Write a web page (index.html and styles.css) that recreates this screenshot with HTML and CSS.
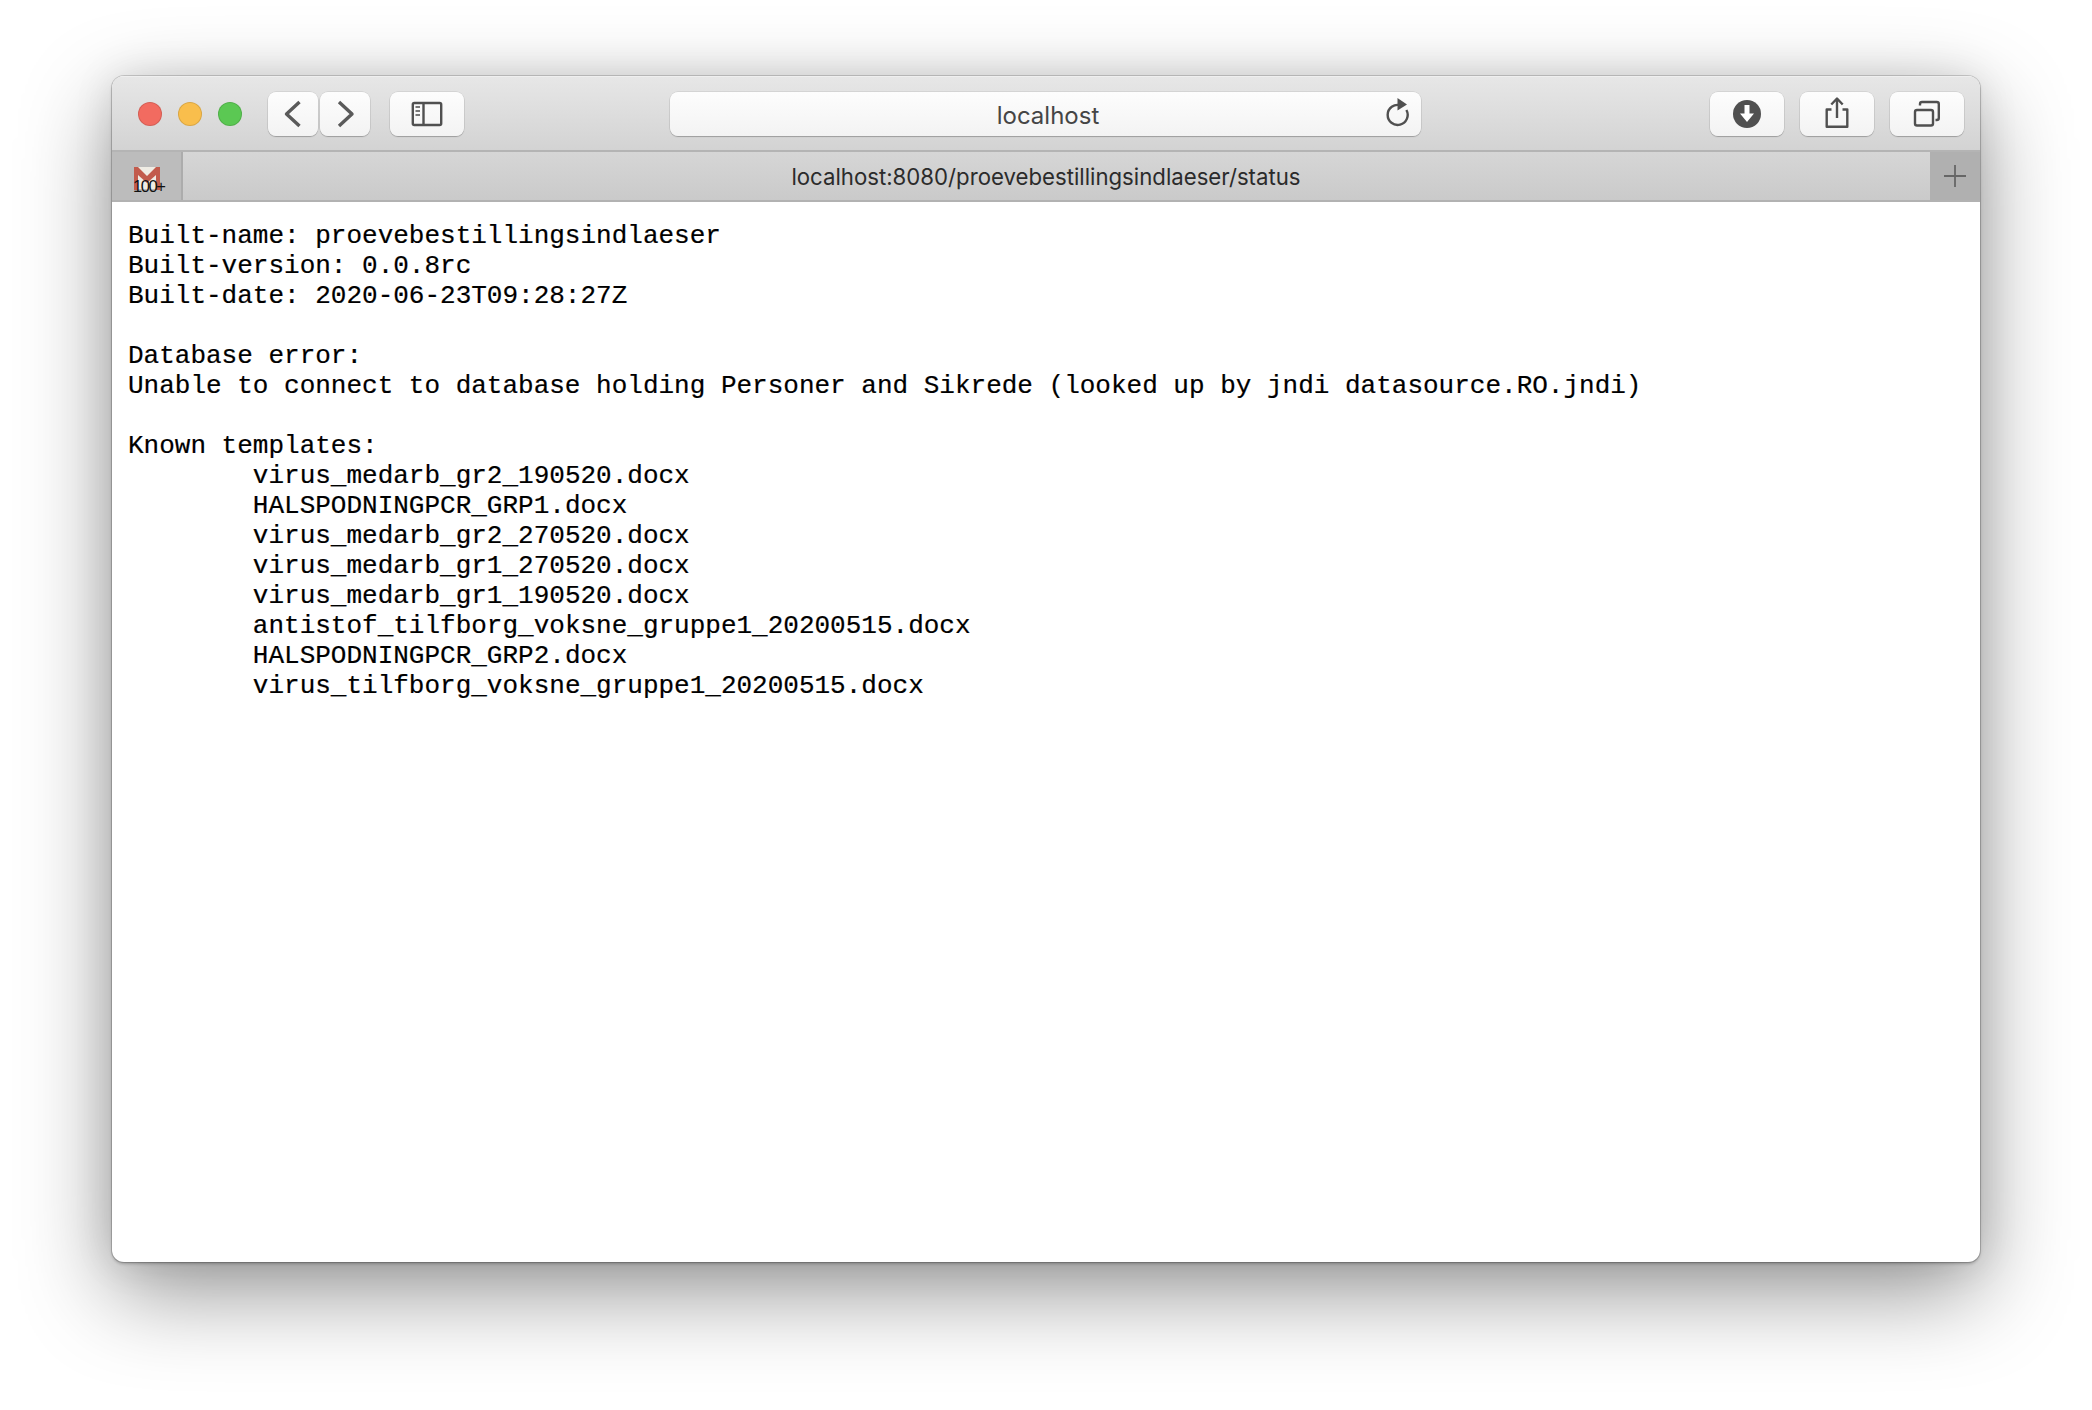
FILE: index.html
```html
<!DOCTYPE html>
<html lang="en">
<head>
<meta charset="utf-8">
<title>localhost</title>
<link rel="stylesheet" href="styles.css">
</head>
<body>
<main class="window">
  <header class="toolbar">
    <div class="lights">
      <span class="light red"></span>
      <span class="light yellow"></span>
      <span class="light green"></span>
    </div>
    <div class="nav">
      <button class="btn nav-btn" aria-label="Back"><svg width="50" height="44" viewBox="0 0 50 44"><path d="M31.500 10 L18.500 22 L31.500 34" class="ic"/></svg></button>
      <button class="btn nav-btn" aria-label="Forward"><svg width="50" height="44" viewBox="0 0 50 44"><path d="M19 10 L32 22 L19 34" class="ic"/></svg></button>
    </div>
    <button class="btn side-btn" aria-label="Sidebar"><svg width="74" height="44" viewBox="0 0 74 44"><rect x="22.800" y="11" width="28.400" height="22" rx="1.500" class="ic-thin"/><path d="M33.500 11 V33" class="ic-thin"/><path d="M25.500 15 H30 M25.500 19 H30 M25.500 23 H30" class="ic-tick"/></svg></button>
    <div class="address">
      <span class="address-text">localhost</span>
      <svg class="reload" width="26" height="30" viewBox="0 0 26 30"><path d="M16.500 7.300 A10 10 0 1 0 22.400 12" class="ic-thin"/><path d="M13.500 0 L23 6.500 L13.500 12.500 Z" class="ic-fill"/></svg>
    </div>
    <div class="actions">
      <button class="btn act-btn" aria-label="Downloads"><svg width="74" height="44" viewBox="0 0 74 44"><circle cx="37" cy="22" r="14" class="ic-fill"/><path d="M34.500 13 H39.500 V21.500 H44 L37 30 L30 21.500 H34.500 Z" class="ic-white"/></svg></button>
      <button class="btn act-btn" aria-label="Share"><svg width="74" height="44" viewBox="0 0 74 44"><path d="M31.500 17.500 H26.700 V34.800 H47.300 V17.500 H42.500" class="ic-thin"/><path d="M37 26 V7 M31.300 12.500 L37 6.500 L42.700 12.500" class="ic-thin"/></svg></button>
      <button class="btn act-btn" aria-label="Tabs"><svg width="74" height="44" viewBox="0 0 74 44"><rect x="25" y="18" width="18" height="15.500" rx="2" class="ic-thin"/><path d="M30 13.500 V12 Q30 10 32 10 H46.800 Q48.800 10 48.800 12 V26 Q48.800 28 46.800 28 H45.500" class="ic-thin"/></svg></button>
    </div>
  </header>
  <nav class="tabbar">
    <div class="pin-tab">
      <svg class="gmail" width="28" height="24" viewBox="0 0 28 24"><rect x="1" y="1" width="26" height="22" fill="#efece4"/><path d="M1 24 V1 H5 L14 10 L23 1 H27 V24 H23 V9 L14 17 L5 9 V24 Z" fill="#c25b4c"/></svg>
      <span class="badge">100+</span>
    </div>
    <div class="tab-title">localhost:8080/proevebestillingsindlaeser/status</div>
    <div class="new-tab"><svg width="22" height="22" viewBox="0 0 22 22"><path d="M11 0 V22 M0 11 H22" class="ic-plus"/></svg></div>
  </nav>
  <pre class="content">Built-name: proevebestillingsindlaeser
Built-version: 0.0.8rc
Built-date: 2020-06-23T09:28:27Z

Database error:
Unable to connect to database holding Personer and Sikrede (looked up by jndi datasource.RO.jndi)

Known templates:
	virus_medarb_gr2_190520.docx
	HALSPODNINGPCR_GRP1.docx
	virus_medarb_gr2_270520.docx
	virus_medarb_gr1_270520.docx
	virus_medarb_gr1_190520.docx
	antistof_tilfborg_voksne_gruppe1_20200515.docx
	HALSPODNINGPCR_GRP2.docx
	virus_tilfborg_voksne_gruppe1_20200515.docx</pre>
</main>
</body>
</html>
```
FILE: styles.css
```css
* { box-sizing: border-box; }
html, body { margin: 0; height: 100%; background: #fff; overflow: hidden; }
body { padding: 76px 112px 148px 112px; }

.window {
  width: 1868px;
  height: 1186px;
  display: flex;
  flex-direction: column;
  background: #fff;
  border-radius: 12px;
  box-shadow:
    0 0 0 1px rgba(0,0,0,.16),
    0 2px 3px rgba(0,0,0,.22),
    0 30px 90px rgba(0,0,0,.42),
    0 0 40px rgba(0,0,0,.10);
  overflow: hidden;
}

.toolbar {
  height: 76px;
  flex: none;
  display: flex;
  align-items: center;
  padding: 2px 0 0 26px;
  background: linear-gradient(#e7e7e7, #d3d3d3);
  border-bottom: 2px solid #b4b4b4;
  box-shadow: inset 0 1px 0 #efefef;
}
.lights { display: flex; gap: 16px; margin-right: 26px; }
.light { width: 24px; height: 24px; border-radius: 50%; border: 1px solid rgba(0,0,0,.12); }
.red { background: #f26b60; }
.yellow { background: #f9be4c; }
.green { background: #5bc853; }

.btn {
  display: block;
  height: 44px;
  padding: 0;
  border: 0;
  border-radius: 8px;
  background: linear-gradient(#fdfdfd, #f3f3f3);
  box-shadow: 0 0 0 .5px rgba(0,0,0,.13), 0 1px 1px rgba(0,0,0,.22);
}
.btn svg { display: block; }
.nav { display: flex; gap: 2px; margin-right: 20px; }
.nav-btn { width: 50px; }
.side-btn { width: 74px; margin-right: 206px; }
.address {
  width: 751px;
  height: 44px;
  position: relative;
  display: flex;
  align-items: center;
  justify-content: center;
  margin-right: 289px;
  border-radius: 8px;
  background: linear-gradient(#fdfdfd, #f3f3f3);
  box-shadow: 0 0 0 .5px rgba(0,0,0,.13), 0 1px 1px rgba(0,0,0,.22);
}
.address-text {
  font: 24px/30px "Inter", "Liberation Sans", sans-serif;
  color: #454545;
  padding: 4px 0 0 5px;
}
.reload { position: absolute; right: 11px; top: 6px; }
.actions { display: flex; gap: 16px; }
.act-btn { width: 74px; }

.ic, .ic-thin, .ic-tick, .ic-plus { fill: none; stroke-linecap: butt; stroke-linejoin: round; }
.ic { stroke: #5a5a5a; stroke-width: 3.400; }
.ic-thin { stroke: #505050; stroke-width: 2.400; }
.ic-tick { stroke: #777; stroke-width: 2; }
.ic-fill { fill: #505050; }
.ic-white { fill: #fff; }
.ic-plus { stroke: #666; stroke-width: 1.800; }

.tabbar {
  height: 50px;
  flex: none;
  display: flex;
  align-items: stretch;
  background: linear-gradient(#d6d6d6, #cacaca);
  border-bottom: 2px solid #b2b2b2;
}
.pin-tab {
  width: 71px;
  flex: none;
  position: relative;
  background: #bcbcbc;
  border-right: 2px solid #acacac;
}
.gmail { position: absolute; left: 21px; top: 14px; }
.badge {
  position: absolute;
  left: 21px;
  top: 25px;
  font: 16.500px/18px "Liberation Sans", sans-serif;
  letter-spacing: -1.400px;
  color: #111;
}
.tab-title {
  flex: 1;
  padding-right: 21px;
  text-align: center;
  font: 22.200px/49px "Inter", "Liberation Sans", sans-serif;
  color: #2b2b2b;
}
.new-tab {
  width: 50px;
  flex: none;
  display: flex;
  align-items: center;
  justify-content: center;
  background: #b0b0b0;
}
.new-tab svg { display: block; }

.content {
  flex: 1;
  margin: 0;
  padding: 19px 16px 0 16px;
  font: 26px/30px "Liberation Mono", "Courier New", monospace;
  color: #000;
  tab-size: 8;
  white-space: pre;
  -webkit-text-stroke: .2px #000;
}
```
